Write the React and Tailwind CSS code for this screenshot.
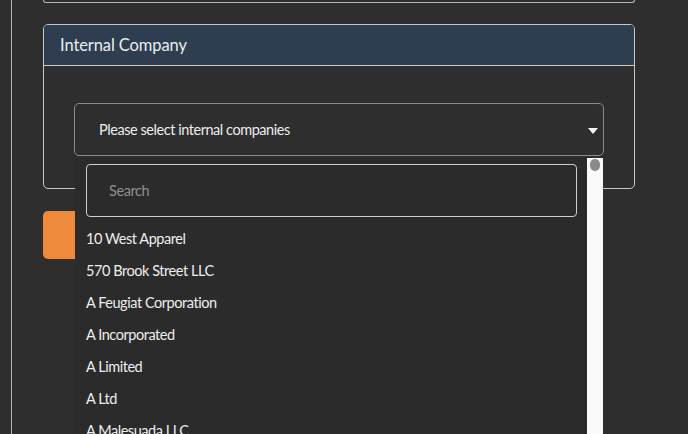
import React from "react";

const items = [
  "10 West Apparel",
  "570 Brook Street LLC",
  "A Feugiat Corporation",
  "A Incorporated",
  "A Limited",
  "A Ltd",
  "A Malesuada LLC",
];

export default function App() {
  return (
    <div
      className="h-[434px] w-[688px] overflow-hidden bg-[#2e2e2e] pl-[11px]"
      style={{ fontFamily: "Lato, 'Noto Sans', sans-serif" }}
    >
      <div className="h-full border-l border-[#b5b5b5] pl-[31px] pr-[53px]">
        <div className="h-[3px] rounded-b-[4px] border border-t-0 border-[#b5b5b5]" />
        <div className="mt-[21px] rounded-[5px] border border-[#c8c8c8]">
          <div className="flex h-[41px] items-center rounded-t-[4px] border-b border-[#c8c8c8] bg-[#2e3d4f] pl-[16px] text-[16.5px] tracking-[-0.1px] text-[#e8edf2]">
            Internal Company
          </div>
          <div className="px-[30px] pb-[32px] pt-[37px]">
            <div className="relative">
              <div className="flex h-[53px] items-center justify-between rounded-[5px] border border-[#8a8a8a] pl-[24px] pr-[5px] text-[14.5px] tracking-[-0.45px] text-[#ececec]">
                <span>Please select internal companies</span>
                <svg width="10" height="6" viewBox="0 0 10 6" className="mt-[3px]">
                  <path d="M0 0 H10 L5 6 Z" fill="#f5f5f5" />
                </svg>
              </div>
              <div className="absolute left-[1px] top-[55px] z-10 flex w-[528px] bg-[#2b2b2b]">
                <div className="flex-1 pl-[11px] pr-[10px] pt-[6px]">
                  <div className="flex h-[53px] items-center rounded-[4px] border border-[#cfcfcf] pl-[22px] text-[14.5px] tracking-[-0.4px] text-[#8f8f8f]">
                    Search
                  </div>
                  <ul className="pt-[6px]">
                    {items.map((t) => (
                      <li key={t} className="flex h-[32px] items-center text-[14.5px] tracking-[-0.45px] text-[#eeeeee]">
                        {t}
                      </li>
                    ))}
                  </ul>
                </div>
                <div className="relative h-[300px] w-[16px] bg-[#fafafa]">
                  <div className="absolute left-[3px] top-[1px] h-[12px] w-[10px] rounded-full bg-[#8a8a8a]" />
                </div>
              </div>
            </div>
          </div>
        </div>
        <div className="mt-[22px] h-[48px] w-[120px] rounded-[5px] bg-[#ef8a3a]" />
      </div>
    </div>
  );
}
